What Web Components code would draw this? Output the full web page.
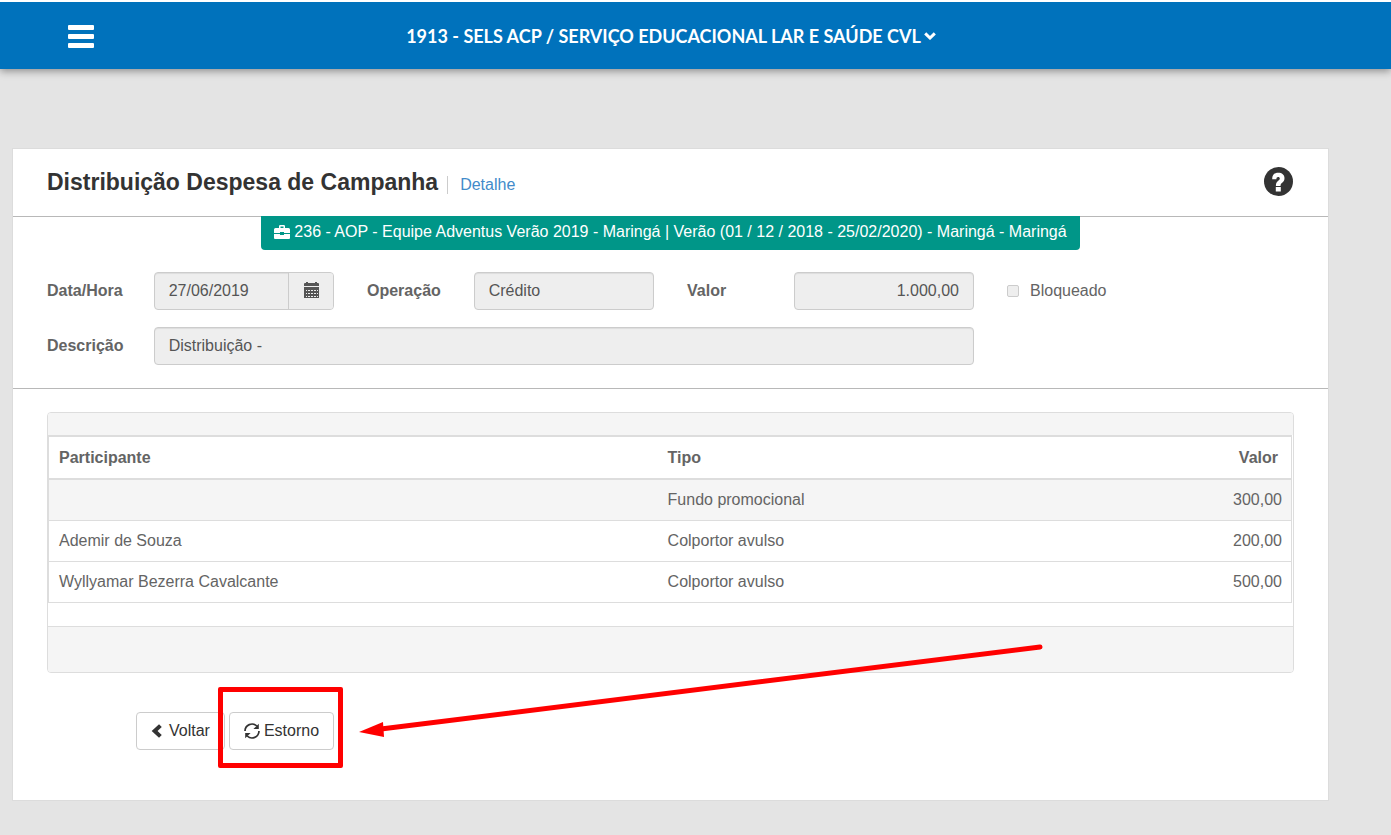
<!DOCTYPE html>
<html lang="pt-BR">
<head>
<meta charset="utf-8">
<title>Distribuição Despesa de Campanha</title>
<style>
html { background: #e4e4e4; }
body { margin: 0; font: 16px/24px "Liberation Sans", Arial, sans-serif; color: #646464; }
</style>
</head>
<body>
<sels-app></sels-app>
<script>
const define = (name, html, setup) => {
  const template = document.createElement('template');
  template.innerHTML = '<style>*{box-sizing:border-box}</style>' + html;
  customElements.define(name, class extends HTMLElement {
    constructor() {
      super();
      this.attachShadow({ mode: 'open' }).append(template.content.cloneNode(true));
    }
    connectedCallback() { if (setup) setup(this, this.shadowRoot); }
  });
};

const ICONS = {
  bars: '<svg viewBox="0 0 26 23"><g fill="currentColor"><rect width="26" height="5" rx="1"/><rect y="9" width="26" height="5" rx="1"/><rect y="18" width="26" height="5" rx="1"/></g></svg>',
  down: '<svg viewBox="0 0 12 8"><path d="M1.200 1.400 6 6l4.800-4.600" fill="none" stroke="currentColor" stroke-width="3"/></svg>',
  help: '<svg viewBox="0 0 29 29"><circle cx="14.500" cy="14.500" r="14.500" fill="currentColor"/><path d="M8.200 12.200c0-4.500 2.200-6.500 6-6.500 3.800 0 6.300 2 6.300 5.300 0 2.500-1 3.800-2.600 5-1 .8-1.400 1.300-1.400 2.900h-4.600c0-2.800.8-4 2.300-5.200 1-.8 1.600-1.300 1.600-2.200 0-.9-.6-1.500-1.600-1.500-1.200 0-1.800.8-1.800 2.200zM11.800 20h5v4.400h-5z" fill="#fff"/></svg>',
  briefcase: '<svg viewBox="0 0 16 14"><path fill="currentColor" fill-rule="evenodd" d="M5 3V1.200Q5 0 6.200 0h3.600Q11 0 11 1.200V3h3.500Q16 3 16 4.500V8h-6V7H6v1H0V4.500Q0 3 1.500 3zM6.500 3h3V1.500h-3zM0 9h6v1h4V9h6v4q0 1-1 1H1q-1 0-1-1z"/></svg>',
  calendar: '<svg viewBox="0 0 15 16"><path fill="currentColor" fill-rule="evenodd" d="M0 4V2q0-1 1-1h1V0h2v1h7V0h2v1h1q1 0 1 1v2zM0 5h15v11H0zM2 8v1h1V8zM4 8v1h2V8zM7 8v1h2V8zM10 8v1h2V8zM13 8v1h1V8zM2 11v1h1v-1zM4 11v1h2v-1zM7 11v1h2v-1zM10 11v1h2v-1zM13 11v1h1v-1zM2 14v1h1v-1zM4 14v1h2v-1zM7 14v1h2v-1zM10 14v1h2v-1zM13 14v1h1v-1z"/></svg>',
  back: '<svg viewBox="0 0 11 14"><path d="M9.400 1.600 3.600 7l5.800 5.400" fill="none" stroke="currentColor" stroke-width="4"/></svg>',
  refresh: '<svg viewBox="0 0 16 16"><g fill="none" stroke="currentColor" stroke-width="1.700"><path d="M1 8a7 7 0 0 1 11.800-5"/><path d="M15 8A7 7 0 0 1 3.200 13"/></g><path fill="currentColor" d="M14.800.8V6H9.400zM1.200 15.200V10h5.400z"/></svg>'
};

define('ui-icon', '<style>:host{display:inline-block;flex:none;line-height:0}svg{display:block;width:100%}</style><span></span>',
  (el, root) => { root.querySelector('span').innerHTML = ICONS[el.getAttribute('name')] || ''; });

define('site-header', `
<style>
:host{display:block;background:#0072bc;border-top:2px solid #fff;color:#fff;box-shadow:0 2px 8px rgba(0,0,0,.4)}
header{display:grid;grid-template-columns:1fr auto 1fr;align-items:center;height:67px;margin-right:49px}
button{border:0;padding:0;background:none;color:inherit;cursor:pointer}
.menu{justify-self:start;margin-left:68px;padding-top:4px}
.menu ui-icon{width:26px}
.unit{display:flex;align-items:center;gap:3px;font:700 18px/24px Lato,sans-serif}
.unit ui-icon{width:12px}
</style>
<header>
<button class="menu" aria-label="Menu"><ui-icon name="bars"></ui-icon></button>
<button class="unit"><span>1913 - SELS ACP / SERVIÇO EDUCACIONAL LAR E SAÚDE CVL</span><ui-icon name="down"></ui-icon></button>
</header>`);

define('card-header', `
<style>
:host{display:flex;align-items:center;height:68px;padding:0 35px 0 34px;border-bottom:1px solid #b8b8b8}
h1{margin:0;font-size:23px;line-height:32px;padding-bottom:2px;color:#333}
a{margin-left:9px;padding-left:12px;border-left:1px solid #ccc;line-height:18px;margin-top:4px;color:#428bca;text-decoration:none}
button{margin-left:auto;border:0;padding:0;background:none;color:#333}
ui-icon{width:29px}
</style>
<h1><slot></slot></h1><a href="#detalhe">Detalhe</a>
<button aria-label="Ajuda"><ui-icon name="help"></ui-icon></button>`);

define('campaign-banner', `
<style>
:host{display:flex;align-items:center;gap:4px;width:fit-content;height:34px;margin:-1px auto 0;padding:0 13px 2px;background:#009688;color:#fff;border-radius:0 0 4px 4px}
ui-icon{width:16px}
</style><ui-icon name="briefcase"></ui-icon><span><slot></slot></span>`);

define('form-field', `
<style>
:host{display:grid;grid-template-columns:subgrid;grid-column:span 3;align-items:center}
:host([wide]){grid-column:span 9}
label{font-weight:700}
.control{grid-column:2 / -1;display:flex;height:38px;border:1px solid #ccc;border-radius:4px;background:#eee;box-shadow:inset 0 1px 1px rgba(0,0,0,.075);overflow:hidden}
input{flex:1;min-width:0;border:0;padding:0 14px;background:none;font:inherit;color:#555;outline:0}
:host([numeric]) input{text-align:right}
button{display:none;width:45px;border:0;border-left:1px solid #ccc;padding:0 14px;background:#eee;color:#555}
:host([date]) button{display:block}
ui-icon{width:15px}
</style>
<label for="field"></label>
<div class="control"><input id="field" readonly><button aria-label="Calendário"><ui-icon name="calendar"></ui-icon></button></div>`,
  (el, root) => {
    root.querySelector('label').textContent = el.getAttribute('label');
    root.querySelector('input').value = el.getAttribute('value');
  });

define('check-field', `
<style>
:host{display:flex;align-items:center;grid-column:span 3}
label{display:flex;align-items:center;gap:11px}
input{appearance:none;width:12px;height:12px;margin:0;border:1px solid #ccc;border-radius:2px;background:#eee}
</style><label><input type="checkbox" disabled><span><slot></slot></span></label>`);

define('detail-form', `
<style>
:host{display:grid;grid-template-columns:repeat(12,minmax(0,1fr));gap:17px 33px;padding:22px 34px 23px;border-bottom:1px solid #b8b8b8}
</style>
<form-field label="Data/Hora" value="27/06/2019" date></form-field>
<form-field label="Operação" value="Crédito"></form-field>
<form-field label="Valor" value="1.000,00" numeric></form-field>
<check-field>Bloqueado</check-field>
<form-field label="Descrição" value="Distribuição -" wide></form-field>`);

define('participant-table', `
<style>
:host{display:block;margin:23px 34px 0;border:1px solid #ddd;border-radius:4px;overflow:hidden}
.top{height:22px;background:#f5f5f5}
.body{padding:0 1px 23px 0;border-bottom:1px solid #ddd}
.foot{height:45px;background:#f5f5f5}
table{width:100%;border-collapse:separate;border-spacing:0;border:1px solid #ddd;border-top:2px solid #ddd;border-bottom:0;table-layout:fixed}
th,td{height:41px;padding:0 9px 0 10px;text-align:left;border-bottom:1px solid #ddd}
th{height:43px;border-bottom-width:2px}
th:first-child{width:49%}
th:last-child,td:last-child{text-align:right}
th:last-child{padding-right:13px}
tbody tr:first-child{background:#f5f5f5}
</style>
<div class="top"></div>
<div class="body"><table>
<thead><tr><th>Participante</th><th>Tipo</th><th>Valor</th></tr></thead>
<tbody>
<tr><td></td><td>Fundo promocional</td><td>300,00</td></tr>
<tr><td>Ademir de Souza</td><td>Colportor avulso</td><td>200,00</td></tr>
<tr><td>Wyllyamar Bezerra Cavalcante</td><td>Colportor avulso</td><td>500,00</td></tr>
</tbody></table></div>
<div class="foot"></div>`);

define('action-button', `
<style>
:host{display:block}
button{display:flex;align-items:center;gap:4px;height:38px;padding:0 14px;border:1px solid #ccc;border-radius:4px;background:#fff;color:#333;font:inherit;white-space:nowrap}
::slotted(ui-icon){width:16px}
:host([back]) button{gap:7px}
:host([back]) ::slotted(ui-icon){width:11px}
</style><button><slot name="icon"></slot><span><slot></slot></span></button>`);

define('highlight-mark', `
<style>
:host{display:block;position:relative}
.frame{position:absolute;inset:-25px -9px -18px -11px;border:5px solid #f00;border-radius:2px;pointer-events:none}
.arrow{position:absolute;left:calc(100% + 25px);top:-70px;width:684px;height:96px;pointer-events:none}
</style>
<slot></slot>
<div class="frame"></div>
<svg class="arrow" viewBox="0 0 684 96"><path d="M681 5 22 87" stroke="#f00" stroke-width="5" stroke-linecap="round"/><path d="M0 90 24 80l1 15z" fill="#f00"/></svg>`);

define('action-bar', `
<style>:host{display:flex;gap:4px;padding:39px 34px 50px 123px}</style>
<action-button back><ui-icon slot="icon" name="back"></ui-icon>Voltar</action-button>
<highlight-mark><action-button><ui-icon slot="icon" name="refresh"></ui-icon>Estorno</action-button></highlight-mark>`);

define('sels-app', `
<style>
:host{display:block}
main{margin:79px 62px 34px 12px;border:1px solid #dcdcdc;background:#fff}
</style>
<site-header></site-header>
<main>
<card-header>Distribuição Despesa de Campanha</card-header>
<campaign-banner>236 - AOP - Equipe Adventus Verão 2019 - Maringá | Verão (01 / 12 / 2018 - 25/02/2020) - Maringá - Maringá</campaign-banner>
<detail-form></detail-form>
<participant-table></participant-table>
<action-bar></action-bar>
</main>`);
</script>
</body>
</html>
